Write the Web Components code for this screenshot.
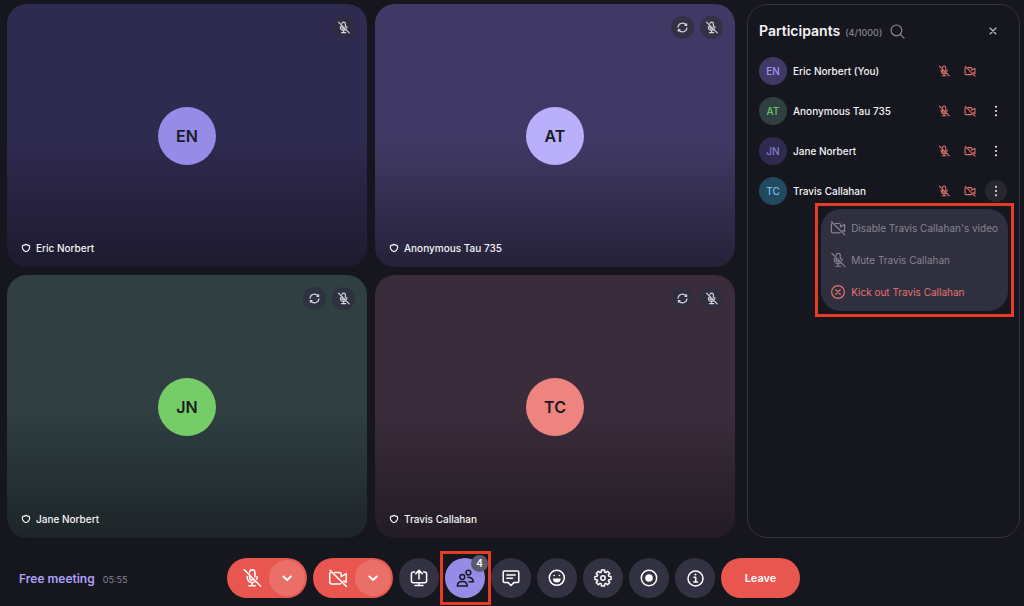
<!DOCTYPE html>
<html lang="en">
<head>
<meta charset="utf-8">
<meta name="viewport" content="width=device-width, initial-scale=1">
<title>Free meeting</title>
<style>
  body {
    margin: 0;
    background: #16161e;
    color: #f4f4f6;
    font-family: Inter, "Liberation Sans", sans-serif;
    font-size: 10px;
    font-weight: 500;
  }
</style>
</head>
<body>
<meeting-room>
  <video-tile slot="tiles" initials="EN" style="--tile: #2f2a50; --avatar: #968ce8; --chip: #2f2b41">Eric Norbert</video-tile>
  <video-tile slot="tiles" initials="AT" sync style="--tile: #413965; --avatar: #b9affb; --chip: #353045">Anonymous Tau 735</video-tile>
  <video-tile slot="tiles" initials="JN" sync style="--tile: #2f3f42; --avatar: #76cd68; --chip: #2e3140">Jane Norbert</video-tile>
  <video-tile slot="tiles" initials="TC" sync style="--tile: #3b2c3b; --avatar: #ed8480; --chip: #302d3f">Travis Callahan</video-tile>

  <participants-panel slot="panel">
    <span slot="count">(4/1000)</span>
    <participant-row initials="EN" style="--avatar: #413965; --ink: #a196f0">Eric Norbert (You)</participant-row>
    <participant-row initials="AT" menu style="--avatar: #2f3f42; --ink: #6cc45e">Anonymous Tau 735</participant-row>
    <participant-row initials="JN" menu style="--avatar: #2f2a50; --ink: #857bd0">Jane Norbert</participant-row>
    <participant-row initials="TC" menu open style="--avatar: #21495f; --ink: #82bce6">Travis Callahan
      <participant-menu slot="menu">
        <menu-item icon="cam-off" disabled>Disable Travis Callahan's video</menu-item>
        <menu-item icon="mic-off" disabled>Mute Travis Callahan</menu-item>
        <menu-item icon="kick" danger>Kick out Travis Callahan</menu-item>
      </participant-menu>
    </participant-row>
  </participants-panel>

  <meeting-info slot="info">
    Free meeting
    <time slot="time">05:55</time>
  </meeting-info>

  <device-button slot="controls" icon="mic-off" label="Unmute microphone"></device-button>
  <device-button slot="controls" icon="cam-off" label="Start video"></device-button>
  <round-button slot="controls" icon="share" label="Share screen"></round-button>
  <round-button slot="controls" icon="people" label="Participants" active badge="4"></round-button>
  <round-button slot="controls" icon="chat" label="Chat"></round-button>
  <round-button slot="controls" icon="smile" label="Reactions"></round-button>
  <round-button slot="controls" icon="gear" label="Settings"></round-button>
  <round-button slot="controls" icon="record" label="Record"></round-button>
  <round-button slot="controls" icon="info" label="Meeting details"></round-button>
  <leave-button slot="controls">Leave</leave-button>
</meeting-room>

<script>
// outline of an 8-tooth cog around (10, 10)
function cogPath() {
  const points = [];
  for (let i = 0; i < 8; i++) {
    [[-16, 6.1], [-11, 8.2], [11, 8.2], [16, 6.1]].forEach(([offset, radius]) => {
      const angle = ((i * 45 + offset) * Math.PI) / 180;
      points.push(`${(10 + radius * Math.cos(angle)).toFixed(2)} ${(10 + radius * Math.sin(angle)).toFixed(2)}`);
    });
  }
  return `M${points.join("L")}Z`;
}

// 20x20 glyphs, stroked with currentColor
const ICONS = {
  "mic-off": `
    <path d="M2.3 1.7 18.7 18.3"/>
    <path d="M7.6 4.2C7.7 2.7 8.8 1.7 10.2 1.7c1.5 0 2.7 1.1 2.7 2.6V9"/>
    <path d="M7.6 7.2v2.3c0 1.5 1.2 2.6 2.6 2.6.7 0 1.2-.2 1.7-.6"/>
    <path d="M5.3 8.4v1.2c0 2.8 2.2 4.9 4.9 4.9 1.2 0 2.2-.3 3.1-1M15.1 8.4v1.2c0 .6-.1 1.1-.3 1.6"/>
    <path d="M10.2 14.5v3M7 17.8h6.4"/>`,
  "cam-off": `
    <path d="M2 2.2 18.4 18.4"/>
    <path d="M2.4 4.6A2 2 0 0 0 1.7 6v8a2 2 0 0 0 2 2h7.7c.6 0 1-.1 1.4-.5"/>
    <path d="M6.7 4.4h4.7a1.8 1.8 0 0 1 1.8 1.8v2.4l5-3v8.8l-2.4-1.4"/>`,
  chevron: `<path d="m6.4 8.5 3.7 3.4 3.7-3.4"/>`,
  share: `
    <path d="M5.5 4H4.4A2 2 0 0 0 2.4 6v6.8a2 2 0 0 0 2 2h11.2a2 2 0 0 0 2-2V6a2 2 0 0 0-2-2h-1.1"/>
    <path d="M10 11V2.6M6.8 5.6 10 2.4l3.2 3.2M10 14.8v2.6M6 17.6h8"/>`,
  people: `
    <circle cx="7.3" cy="9" r="2.4"/>
    <path d="M2.3 18c.1-2.8 2-4.5 5-4.5s4.9 1.7 5 4.5z"/>
    <circle cx="13.4" cy="4.6" r="2.4"/>
    <path d="M12.7 9.2c3.1 0 5.4 1.5 5.8 4.6h-4.4"/>`,
  chat: `
    <path d="M3.4 3.1h13.2c.7 0 1.2.5 1.2 1.2v8.9c0 .7-.5 1.2-1.2 1.2h-3.5L10 17.5l-3.1-3.1H3.4c-.7 0-1.2-.5-1.2-1.2V4.3c0-.7.5-1.2 1.2-1.2z"/>
    <path d="M5.8 7.1h8.4M5.8 10.3h5.7"/>`,
  smile: `
    <circle cx="9.8" cy="9.8" r="7.5"/>
    <path d="M5.9 10.6h7.8a3.9 3.9 0 0 1-7.8 0z" fill="currentColor" stroke="none"/>
    <path d="M7.1 7.4h.2M12.3 7.4h.2"/>`,
  gear: `<path d="${cogPath()}"/><circle cx="10" cy="10" r="2.2"/>`,
  record: `<circle cx="10" cy="10" r="7.7"/><circle cx="10" cy="10" r="3.8" fill="currentColor" stroke="none"/>`,
  info: `
    <circle cx="10.5" cy="10.5" r="7.5"/>
    <path d="M9 9.3h1.7V14M8.8 14h3.7"/>
    <circle cx="10.5" cy="6.6" r="1" fill="currentColor" stroke="none"/>`,
  kick: `<circle cx="10" cy="10" r="8"/><path d="m7.2 7.2 5.6 5.6M12.8 7.2l-5.6 5.6"/>`,
  sync: `
    <path d="M3.2 9.6A6.9 6.9 0 0 1 15.8 6.3M16.8 10.4A6.9 6.9 0 0 1 4.2 13.7"/>
    <path d="M16.4 4.2v2.6h-2.6M3.6 15.8v-2.6h2.6"/>`,
  search: `<circle cx="8.6" cy="8.6" r="7.2"/><path d="m13.8 13.8 5 5"/>`,
  close: `<path d="m5 5 10 10M15 5 5 15"/>`,
  dots: `<g fill="currentColor" stroke="none"><circle cx="10" cy="3" r="1.7"/><circle cx="10" cy="10" r="1.7"/><circle cx="10" cy="17" r="1.7"/></g>`,
  shield: `<path d="M10 2.6c1.6 1.5 3.6 2.2 6.6 2.2.9 2 .9 4.200.2 6.400-1 3-3.400 5-6.800 6.200-3.400-1.200-5.800-3.200-6.800-6.200-.7-2.200-.7-4.400.2-6.400 3 0 5-.7 6.600-2.200z"/>`,
};

const BUTTON_RESET = `
  button {
    display: flex;
    align-items: center;
    justify-content: center;
    margin: 0;
    padding: 0;
    border: 0;
    background: none;
    color: inherit;
    font: inherit;
    cursor: pointer;
  }
`;

function createTemplate(html) {
  const template = document.createElement("template");
  template.innerHTML = html;
  return template;
}

class BaseElement extends HTMLElement {
  constructor() {
    super();
    this.attachShadow({ mode: "open" });
    this.shadowRoot.appendChild(this.constructor.template.content.cloneNode(true));
  }

  $(selector) {
    return this.shadowRoot.querySelector(selector);
  }
}

class UiIcon extends HTMLElement {
  constructor() {
    super();
    this.attachShadow({ mode: "open" });
  }

  static get observedAttributes() {
    return ["name"];
  }

  attributeChangedCallback() {
    this.shadowRoot.innerHTML = `
      <style>
        :host { display: block; flex: none; width: var(--size, 20px); height: var(--size, 20px); }
        svg {
          display: block;
          width: 100%;
          height: 100%;
          overflow: visible;
          fill: none;
          stroke: currentColor;
          stroke-width: var(--stroke, 1.5);
          stroke-linecap: round;
          stroke-linejoin: round;
        }
      </style>
      <svg viewBox="0 0 20 20" aria-hidden="true">${ICONS[this.getAttribute("name")] || ""}</svg>`;
  }
}

class MeetingRoom extends BaseElement {
  static template = createTemplate(`
    <style>
      :host { display: flex; flex-direction: column; min-height: 100vh; }
      main { flex: 1; display: flex; gap: 12px; padding: 4px 4px 0 7px; }
      .tiles {
        flex: 1;
        display: grid;
        grid-template-columns: 1fr 1fr;
        grid-auto-rows: 1fr;
        gap: 8px;
      }
      footer {
        display: grid;
        grid-template-columns: 1fr auto 1fr;
        align-items: center;
        padding: 20px 16px 8px 19px;
      }
      .controls { display: flex; gap: 6px; }
    </style>
    <main>
      <section class="tiles" aria-label="Video"><slot name="tiles"></slot></section>
      <slot name="panel"></slot>
    </main>
    <footer>
      <slot name="info"></slot>
      <div class="controls"><slot name="controls"></slot></div>
    </footer>
  `);
}

class VideoTile extends BaseElement {
  static template = createTemplate(`
    <style>
      ${BUTTON_RESET}
      :host {
        display: grid;
        grid-template-rows: 1fr auto 1fr;
        box-sizing: border-box;
        padding: 12px;
        border-radius: 20px;
        background: linear-gradient(transparent 52%, rgba(12, 12, 16, .52)) var(--tile);
      }
      .chips { display: flex; gap: 6px; justify-content: flex-end; align-items: flex-start; }
      .chips button {
        width: 23px;
        height: 23px;
        border-radius: 50%;
        background: var(--chip);
        color: #d6d6dc;
        --size: 13px;
        --stroke: 1.8;
      }
      .avatar {
        display: grid;
        place-items: center;
        justify-self: center;
        width: 58px;
        height: 58px;
        border-radius: 50%;
        background: var(--avatar);
        color: #1a1a24;
        font-size: 16px;
        font-weight: 600;
      }
      .name { display: flex; gap: 5px; align-items: center; align-self: end; padding-left: 2px; line-height: 14px; }
      .name ui-icon { --size: 10px; --stroke: 2.4; }
      :host(:not([sync])) .sync { display: none; }
    </style>
    <div class="chips">
      <button class="sync" aria-label="Switch camera"><ui-icon name="sync"></ui-icon></button>
      <button aria-label="Microphone off"><ui-icon name="mic-off"></ui-icon></button>
    </div>
    <div class="avatar"></div>
    <div class="name"><ui-icon name="shield"></ui-icon><span><slot></slot></span></div>
  `);

  connectedCallback() {
    this.$(".avatar").textContent = this.getAttribute("initials");
  }
}

class ParticipantsPanel extends BaseElement {
  static template = createTemplate(`
    <style>
      ${BUTTON_RESET}
      :host {
        display: block;
        box-sizing: border-box;
        width: 273px;
        padding: 12px 12px 12px 11px;
        border: 1px solid #343342;
        border-radius: 20px;
      }
      header { display: flex; align-items: center; height: 28px; padding-right: 3px; }
      h2 { margin: 0; font-size: 14px; font-weight: 600; line-height: 20px; }
      .count { margin: 4px 8px 0 5px; color: #858491; font-size: 9px; line-height: 12px; }
      .search { color: #8f8e9b; --size: 15px; }
      .close { width: 22px; height: 22px; margin-left: auto; color: #c4c4cc; --size: 12px; --stroke: 1.8; }
      .list { display: flex; flex-direction: column; gap: 12px; margin-top: 12px; }
    </style>
    <header>
      <h2>Participants</h2>
      <span class="count"><slot name="count"></slot></span>
      <button class="search" aria-label="Search"><ui-icon name="search"></ui-icon></button>
      <button class="close" aria-label="Close"><ui-icon name="close"></ui-icon></button>
    </header>
    <div class="list"><slot></slot></div>
  `);
}

class ParticipantRow extends BaseElement {
  static template = createTemplate(`
    <style>
      ${BUTTON_RESET}
      :host { display: flex; align-items: center; gap: 4px; position: relative; }
      .avatar {
        display: grid;
        place-items: center;
        width: 28px;
        height: 28px;
        margin-right: 2px;
        border-radius: 50%;
        background: var(--avatar);
        color: var(--ink);
      }
      .name { flex: 1; line-height: 14px; white-space: nowrap; }
      button { width: 22px; height: 22px; border-radius: 50%; color: #e2726f; --size: 12px; --stroke: 1.8; }
      .more { color: #f4f4f6; }
      :host([open]) .more { background: #272732; }
      :host(:not([menu])) .more { visibility: hidden; }
      /* the menu hangs below the row, over whatever follows it */
      slot[name=menu] { display: block; position: absolute; top: 26px; right: -7px; }
      :host(:not([open])) slot[name=menu] { display: none; }
    </style>
    <span class="avatar"></span>
    <span class="name"><slot></slot></span>
    <button aria-label="Microphone off"><ui-icon name="mic-off"></ui-icon></button>
    <button aria-label="Camera off"><ui-icon name="cam-off"></ui-icon></button>
    <button class="more" aria-label="More actions"><ui-icon name="dots"></ui-icon></button>
    <slot name="menu"></slot>
  `);

  connectedCallback() {
    this.$(".avatar").textContent = this.getAttribute("initials");
    this.$(".more").addEventListener("click", () => this.toggleAttribute("open"));
  }
}

class ParticipantMenu extends BaseElement {
  static template = createTemplate(`
    <style>
      :host { display: block; padding: 3px; border: 3px solid #e83c22; background: #16161e; }
      .menu { padding: 3px 10px 3px 9px; border-radius: 20px; background: #302f40; }
    </style>
    <div class="menu" role="menu"><slot></slot></div>
  `);
}

class MenuItem extends BaseElement {
  static template = createTemplate(`
    <style>
      ${BUTTON_RESET}
      :host { display: block; color: #85848f; font-weight: 400; }
      :host([danger]) { color: #e5726f; }
      button { gap: 5px; height: 32px; white-space: nowrap; --size: 16px; --stroke: 1.5; }
      button:disabled { cursor: default; }
    </style>
    <button role="menuitem"><ui-icon></ui-icon><span><slot></slot></span></button>
  `);

  connectedCallback() {
    this.$("ui-icon").setAttribute("name", this.getAttribute("icon"));
    this.$("button").disabled = this.hasAttribute("disabled");
  }
}

class MeetingInfo extends BaseElement {
  static template = createTemplate(`
    <style>
      :host { display: flex; align-items: baseline; gap: 8px; }
      .title { color: #b0a0f8; font-size: 12px; font-weight: 600; }
      .time { color: #858491; font-size: 9px; font-weight: 400; }
    </style>
    <span class="title"><slot></slot></span>
    <span class="time"><slot name="time"></slot></span>
  `);
}

class DeviceButton extends BaseElement {
  static template = createTemplate(`
    <style>
      ${BUTTON_RESET}
      :host {
        display: flex;
        box-sizing: border-box;
        width: 80px;
        height: 40px;
        padding: 2px;
        border-radius: 20px;
        background: #e9564f;
        color: #fff;
      }
      .main { flex: 1; padding-left: 6px; }
      .options { width: 36px; border-radius: 50%; background: #eb6f69; --stroke: 2; }
    </style>
    <button class="main"><ui-icon></ui-icon></button>
    <button class="options"><ui-icon name="chevron"></ui-icon></button>
  `);

  connectedCallback() {
    const label = this.getAttribute("label");
    this.$("ui-icon").setAttribute("name", this.getAttribute("icon"));
    this.$(".main").setAttribute("aria-label", label);
    this.$(".options").setAttribute("aria-label", `${label} options`);
  }
}

class RoundButton extends BaseElement {
  static template = createTemplate(`
    <style>
      ${BUTTON_RESET}
      :host { display: block; position: relative; }
      button { width: 40px; height: 40px; border-radius: 50%; background: #333242; color: #fff; }
      :host([active]) button { background: #968ce8; color: #1a1a24; }
      .badge {
        position: absolute;
        top: -3px;
        right: -3px;
        width: 17px;
        border-radius: 50%;
        background: #5b596c;
        color: #fff;
        font-size: 10px;
        font-weight: 600;
        line-height: 17px;
        text-align: center;
      }
      .frame {
        position: absolute;
        inset: -7px -6px -7px -5px;
        border: 3px solid #e83c22;
        pointer-events: none;
      }
      :host(:not([badge])) .badge,
      :host(:not([active])) .frame { display: none; }
    </style>
    <button><ui-icon></ui-icon></button>
    <span class="badge"></span>
    <span class="frame"></span>
  `);

  connectedCallback() {
    this.$("ui-icon").setAttribute("name", this.getAttribute("icon"));
    this.$("button").setAttribute("aria-label", this.getAttribute("label"));
    this.$(".badge").textContent = this.getAttribute("badge");
  }
}

class LeaveButton extends BaseElement {
  static template = createTemplate(`
    <style>
      ${BUTTON_RESET}
      :host { display: block; }
      button {
        width: 79px;
        height: 40px;
        border-radius: 20px;
        background: #e9564f;
        color: #fff;
        font-size: 11px;
        font-weight: 600;
      }
    </style>
    <button><slot></slot></button>
  `);
}

customElements.define("ui-icon", UiIcon);
customElements.define("meeting-room", MeetingRoom);
customElements.define("video-tile", VideoTile);
customElements.define("participants-panel", ParticipantsPanel);
customElements.define("participant-row", ParticipantRow);
customElements.define("participant-menu", ParticipantMenu);
customElements.define("menu-item", MenuItem);
customElements.define("meeting-info", MeetingInfo);
customElements.define("device-button", DeviceButton);
customElements.define("round-button", RoundButton);
customElements.define("leave-button", LeaveButton);
</script>
</body>
</html>
